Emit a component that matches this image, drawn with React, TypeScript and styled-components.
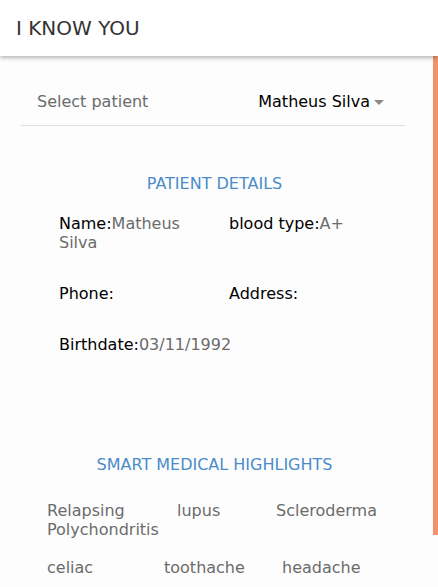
import React from "react";
import styled, { createGlobalStyle } from "styled-components";

const Global = createGlobalStyle`
  html, body { margin: 0; padding: 0; background: #fdfdfd; }
  body { font-family: "DejaVu Sans", Verdana, sans-serif; overflow: hidden; }
  * { box-sizing: border-box; }
`;

const Page = styled.div`
  position: relative;
  width: 438px;
  height: 587px;
  overflow: hidden;
  background: #fdfdfd;
`;

const Header = styled.header`
  position: relative;
  z-index: 2;
  height: 56px;
  display: flex;
  align-items: center;
  padding-left: 16px;
  background: #ffffff;
  box-shadow: 0 2px 4px rgba(0, 0, 0, 0.28);
`;

const Title = styled.h1`
  margin: 0;
  font-size: 20px;
  font-weight: 400;
  color: #333333;
`;

const Main = styled.main`
  padding: 22px 33px 0 21px;
  display: flex;
  flex-direction: column;
`;

const SelectRow = styled.div`
  height: 48px;
  display: flex;
  align-items: center;
  justify-content: space-between;
  padding: 0 21px 0 16px;
  border-bottom: 1px solid #dddddd;
`;

const SelectLabel = styled.span`
  font-size: 16px;
  color: #6b6b6b;
`;

const SelectValue = styled.span`
  display: flex;
  align-items: center;
  gap: 4px;
  font-size: 16px;
  color: #000000;
`;

const Caret = styled.span`
  width: 0;
  height: 0;
  border-left: 5px solid transparent;
  border-right: 5px solid transparent;
  border-top: 5px solid #8a8a8a;
  margin-top: 1px;
`;

const SectionTitle = styled.h2<{ $top: number }>`
  margin: ${(p) => p.$top}px 0 0 0;
  text-align: center;
  font-size: 16px;
  line-height: 19px;
  font-weight: 400;
  color: #4a8cc9;
  padding-left: 3px;
`;

const DetailsGrid = styled.div`
  display: grid;
  grid-template-columns: 150px 150px;
  column-gap: 20px;
  row-gap: 32px;
  margin: 21px 0 0 38px;
`;

const Field = styled.div`
  font-size: 16px;
  line-height: 19px;
  color: #000000;
`;

const FieldValue = styled.span`
  color: #6b6b6b;
`;

const Highlights = styled.div`
  display: flex;
  flex-direction: column;
  gap: 19px;
  margin: 27px 0 0 26px;
`;

const HighlightRow = styled.div`
  display: flex;
`;

const Highlight = styled.div`
  font-size: 16px;
  line-height: 19px;
  color: #6b6b6b;
`;

const ScrollThumb = styled.div`
  position: absolute;
  right: 0;
  top: 56px;
  width: 5px;
  height: 479px;
  background: #f4926c;
`;

const details = [
  { label: "Name:", value: "Matheus Silva" },
  { label: "blood type:", value: "A+" },
  { label: "Phone:", value: "" },
  { label: "Address:", value: "" },
  { label: "Birthdate:", value: "03/11/1992" },
];

const highlightRows = [
  [
    { text: "Relapsing Polychondritis", w: 130 },
    { text: "lupus", w: 99 },
    { text: "Scleroderma", w: 120 },
  ],
  [
    { text: "celiac", w: 117 },
    { text: "toothache", w: 118 },
    { text: "headache", w: 120 },
  ],
];

export default function App() {
  return (
    <Page>
      <Global />
      <Header>
        <Title>I KNOW YOU</Title>
      </Header>
      <Main>
        <SelectRow>
          <SelectLabel>Select patient</SelectLabel>
          <SelectValue>
            Matheus Silva
            <Caret />
          </SelectValue>
        </SelectRow>
        <SectionTitle $top={48}>PATIENT DETAILS</SectionTitle>
        <DetailsGrid>
          {details.map((d) => (
            <Field key={d.label}>
              {d.label}
              <FieldValue>{d.value}</FieldValue>
            </Field>
          ))}
        </DetailsGrid>
        <SectionTitle $top={101}>SMART MEDICAL HIGHLIGHTS</SectionTitle>
        <Highlights>
          {highlightRows.map((row, i) => (
            <HighlightRow key={i}>
              {row.map((h) => (
                <Highlight key={h.text} style={{ width: h.w }}>
                  {h.text}
                </Highlight>
              ))}
            </HighlightRow>
          ))}
        </Highlights>
      </Main>
      <ScrollThumb />
    </Page>
  );
}
